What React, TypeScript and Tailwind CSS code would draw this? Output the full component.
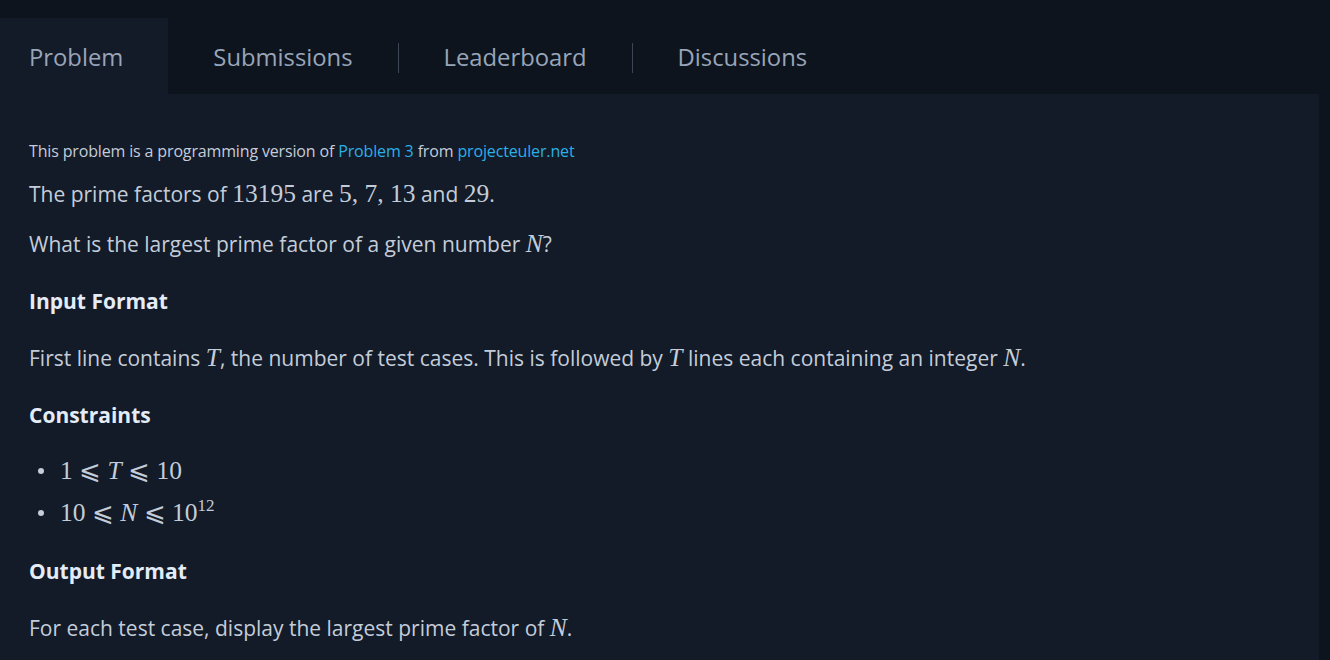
import React from 'react';

const sans = { fontFamily: '"Open Sans", "Noto Sans", sans-serif' };
const mathFont = '"Liberation Serif", "DejaVu Serif", serif';

function M({ children, italic = false }: { children: React.ReactNode; italic?: boolean }) {
  return (
    <span
      className={`text-[25.5px] ${italic ? 'italic' : ''}`}
      style={{ fontFamily: mathFont }}
    >
      {children}
    </span>
  );
}

const LEQ = '\u2A7D';

function Tabs() {
  const tabs = ['Problem', 'Submissions', 'Leaderboard', 'Discussions'];
  return (
    <div className="flex h-[76px] mt-[18px]">
      {tabs.map((t, i) => (
        <div key={t} className="flex items-center">
          {i > 1 && <div className="w-px h-[30px] bg-[#3d4656] mt-[4px]" />}
          <div
            className={`h-[76px] pt-[4px] flex items-center text-[23.8px] text-[#98a5b9] ${
              i === 0 ? 'bg-[#131a28] pl-[29px] pr-[45px]' : 'px-[45px]'
            }`}
          >
            {t}
          </div>
        </div>
      ))}
    </div>
  );
}

export default function App() {
  return (
    <div className="w-[1330px] h-[660px] bg-[#0e141e] overflow-hidden" style={sans}>
      <Tabs />
      <div className="w-[1319px] h-[566px] bg-[#131a28] pt-[47px] pl-[29px] text-[#c3cdd9] text-[21px] leading-[28px]">
        <p className="text-[16px] leading-[20px] tracking-[-0.15px]">
          This problem is a programming version of{' '}
          <span className="text-[#2ab0e6]">Problem 3</span> from{' '}
          <span className="text-[#2ab0e6]">projecteuler.net</span>
        </p>

        <p className="mt-[19px]">
          The prime factors of <M>13195</M> are <M>5, 7, 13</M> and <M>29</M>.
        </p>
        <p className="mt-[22px]">
          What is the largest prime factor of a given number <M italic>N</M>?
        </p>

        <h3 className="mt-[29px] font-bold text-[#e3ecf7]">Input Format</h3>
        <p className="mt-[29px]">
          First line contains <M italic>T</M>, the number of test cases. This is followed by{' '}
          <M italic>T</M> lines each containing an integer <M italic>N</M>.
        </p>

        <h3 className="mt-[29px] font-bold text-[#e3ecf7]">Constraints</h3>
        <ul className="mt-[28px]">
          <li className="flex items-center h-[28px]">
            <span className="w-[6px] h-[6px] rounded-full bg-[#c3cdd9] ml-[9px] mr-[16px]" />
            <M>
              1 {LEQ} <i>T</i> {LEQ} 10
            </M>
          </li>
          <li className="flex items-center h-[28px] mt-[14px]">
            <span className="w-[6px] h-[6px] rounded-full bg-[#c3cdd9] ml-[9px] mr-[16px]" />
            <M>
              10 {LEQ} <i>N</i> {LEQ} 10<sup className="text-[17px] relative -top-[10px]">12</sup>
            </M>
          </li>
        </ul>

        <h3 className="mt-[30px] font-bold text-[#e3ecf7]">Output Format</h3>
        <p className="mt-[29px]">
          For each test case, display the largest prime factor of <M italic>N</M>.
        </p>
      </div>
    </div>
  );
}
